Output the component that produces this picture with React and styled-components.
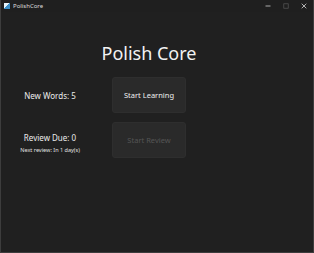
import React from 'react';
import styled, { createGlobalStyle } from 'styled-components';

const GlobalStyle = createGlobalStyle`
  html, body {
    margin: 0;
    padding: 0;
    background: #1f1f1f;
  }
  * {
    box-sizing: border-box;
  }
`;

const Window = styled.div`
  width: 314px;
  height: 253px;
  background: #202020;
  border: 1px solid #3d3d3d;
  border-top: none;
  display: flex;
  flex-direction: column;
  font-family: "Noto Sans", "Open Sans", sans-serif;
  color: #e6e6e6;
`;

const TitleBar = styled.div`
  height: 12px;
  display: flex;
  align-items: center;
  padding-left: 3px;
  background: #1f1f1f;
`;

const AppIcon = styled.div`
  width: 6px;
  height: 6px;
  background: linear-gradient(135deg, #e8f4fb 50%, #3a8fc8 50%);
  margin-right: 3px;
`;

const TitleText = styled.span`
  font-size: 6px;
  color: #dcdcdc;
  flex: 1;
`;

const Controls = styled.div`
  display: flex;
  align-items: center;
  height: 100%;
`;

const Control = styled.div`
  width: 18px;
  height: 100%;
  display: flex;
  align-items: center;
  justify-content: center;
`;

const Content = styled.div`
  flex: 1;
  display: grid;
  grid-template-columns: 98px 74px;
  grid-template-rows: 40px 36px 36px;
  column-gap: 13px;
  row-gap: 9px;
  padding-top: 16px;
  align-content: start;
`;

const Heading = styled.h1`
  grid-column: 2;
  justify-self: center;
  align-self: end;
  margin: 0 0 3px;
  font-size: 18px;
  line-height: 24px;
  font-weight: 400;
  white-space: nowrap;
  color: #f2f2f2;
`;

const Stat = styled.div`
  grid-column: 1;
  display: flex;
  flex-direction: column;
  align-items: center;
  justify-content: center;
  gap: 3px;
  padding-top: ${p => p.$offset || 0}px;
`;

const StatLabel = styled.span`
  font-size: 8px;
  color: #ececec;
`;

const StatNote = styled.span`
  font-size: 5.5px;
  color: #e0e0e0;
`;

const ActionButton = styled.button`
  grid-column: 2;
  border: 1px solid #2e2e2e;
  border-radius: 3px;
  background: #2a2a2a;
  color: ${p => (p.disabled ? '#555' : '#f0f0f0')};
  font-family: inherit;
  font-size: 7.5px;
  padding: 0;
  cursor: ${p => (p.disabled ? 'default' : 'pointer')};
`;

function App() {
  return (
    <>
      <GlobalStyle />
      <Window>
        <TitleBar>
          <AppIcon />
          <TitleText>PolishCore</TitleText>
          <Controls>
            <Control>
              <svg width="6" height="6" viewBox="0 0 6 6">
                <path d="M0.5 3h5" stroke="#d0d0d0" strokeWidth="0.8" />
              </svg>
            </Control>
            <Control>
              <svg width="6" height="6" viewBox="0 0 6 6">
                <rect x="0.8" y="0.8" width="4.4" height="4.4" fill="none" stroke="#5a5a5a" strokeWidth="0.7" />
              </svg>
            </Control>
            <Control>
              <svg width="6" height="6" viewBox="0 0 6 6">
                <path d="M0.7 0.7l4.6 4.6M5.3 0.7l-4.6 4.6" stroke="#d8d8d8" strokeWidth="0.8" />
              </svg>
            </Control>
          </Controls>
        </TitleBar>
        <Content>
          <Heading>Polish Core</Heading>
          <Stat>
            <StatLabel>New Words: 5</StatLabel>
          </Stat>
          <ActionButton>Start Learning</ActionButton>
          <Stat $offset={6}>
            <StatLabel>Review Due: 0</StatLabel>
            <StatNote>Next review: In 1 day(s)</StatNote>
          </Stat>
          <ActionButton disabled>Start Review</ActionButton>
        </Content>
      </Window>
    </>
  );
}

export default App;
